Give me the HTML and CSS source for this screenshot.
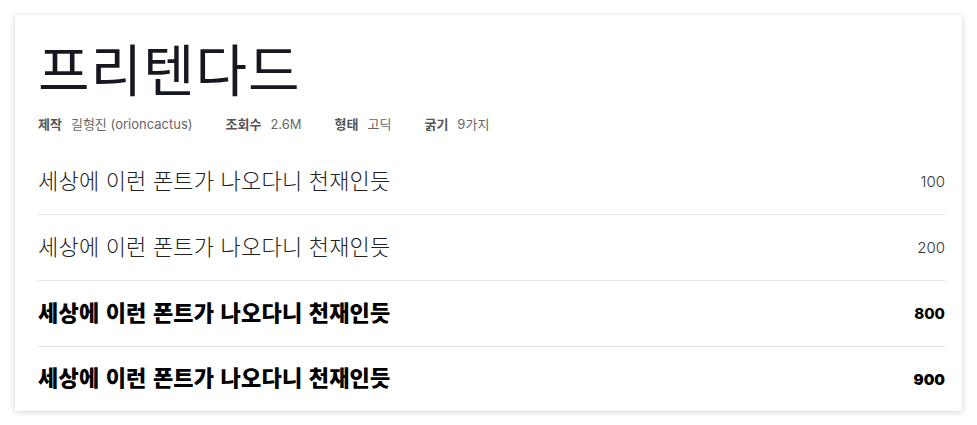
FILE: index.html
```html
<!DOCTYPE html>
<html lang="ko">
<head>
<meta charset="utf-8">
<link rel="stylesheet" href="styles.css">
</head>
<body>
<div class="card">
  <h1 class="title">프리텐다드</h1>
  <div class="meta">
    <div class="meta-item"><span class="meta-label">제작</span><span class="meta-value">길형진 (orioncactus)</span></div>
    <div class="meta-item"><span class="meta-label">조회수</span><span class="meta-value">2.6M</span></div>
    <div class="meta-item"><span class="meta-label">형태</span><span class="meta-value">고딕</span></div>
    <div class="meta-item"><span class="meta-label">굵기</span><span class="meta-value">9가지</span></div>
  </div>
  <ul class="rows">
    <li class="row w100"><span class="sample">세상에 이런 폰트가 나오다니 천재인듯</span><span class="weight">100</span></li>
    <li class="row w200"><span class="sample">세상에 이런 폰트가 나오다니 천재인듯</span><span class="weight">200</span></li>
    <li class="row w800"><span class="sample">세상에 이런 폰트가 나오다니 천재인듯</span><span class="weight">800</span></li>
    <li class="row w900"><span class="sample">세상에 이런 폰트가 나오다니 천재인듯</span><span class="weight">900</span></li>
  </ul>
</div>
</body>
</html>
```

FILE: styles.css
```css
html, body {
  margin: 0;
  background: #fff;
}
body {
  padding: 15px;
  font-family: Inter, "Noto Sans CJK KR", sans-serif;
  color: #111;
}
.card {
  background: #fff;
  box-shadow: 0 1px 6px rgba(0, 0, 0, 0.18);
  padding: 11px 17px 0 23px;
}
.title {
  margin: 0;
  font-family: "Noto Sans CJK KR", sans-serif;
  font-weight: 400;
  font-size: 56px;
  line-height: normal;
  letter-spacing: 1px;
  color: #15181e;
}
.meta {
  display: flex;
  gap: 33px;
  margin-top: 7px;
  font-size: 13px;
  line-height: 20px;
}
.meta-item {
  display: flex;
  gap: 9px;
}
.meta-label {
  font-weight: 700;
  color: #555;
  font-family: "Noto Sans CJK KR", sans-serif;
}
.meta-value {
  color: #666;
}
.rows {
  list-style: none;
  margin: 15px 0 0;
  padding: 0;
}
.row {
  display: flex;
  justify-content: space-between;
  align-items: center;
  height: 65px;
  border-bottom: 1px solid #e3e3e3;
}
.row:last-child {
  border-bottom: none;
  height: 64px;
}
.sample {
  font-family: "Noto Sans CJK KR", sans-serif;
  font-size: 22px;
  letter-spacing: 0.2px;
  color: #222;
  padding-bottom: 6px;
}
.weight {
  font-size: 15px;
  color: #333;
}
.w100 .sample, .w100 .weight,
.w200 .sample, .w200 .weight { font-weight: 300; }
.w800 .sample, .w800 .weight { font-weight: 800; color: #000; }
.w900 .sample, .w900 .weight { font-weight: 900; color: #000; }
```
